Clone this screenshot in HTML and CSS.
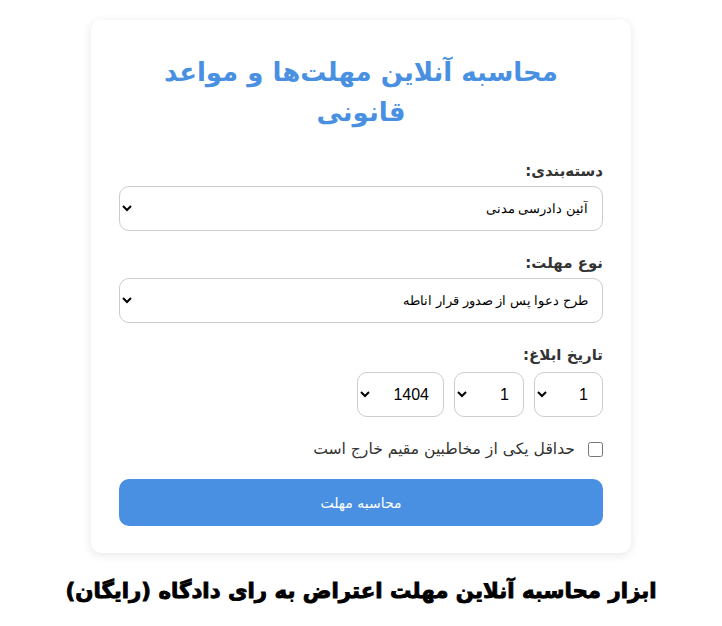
FILE: index.html
```html
<!DOCTYPE html>
<html lang="fa" dir="rtl">
<head>
    <meta charset="UTF-8">
    <meta name="viewport" content="width=device-width, initial-scale=1.0">
    <title>محاسبه آنلاین مهلت‌ها و مواعد قانونی</title>
    <link rel="stylesheet" href="styles.css">
</head>
<body>
    <div class="container">
        <h1>محاسبه آنلاین مهلت‌ها و مواعد قانونی</h1>
        <form id="deadlineForm">
            <!-- دسته‌بندی -->
            <div class="form-group">
                <label for="category">دسته‌بندی:</label>
                <select id="category" class="full">
                    <option>آئین دادرسی مدنی</option>
                </select>
            </div>
            <!-- نوع مهلت -->
            <div class="form-group">
                <label for="type">نوع مهلت:</label>
                <select id="type" class="full">
                    <option>طرح دعوا پس از صدور قرار اناطه</option>
                </select>
            </div>
            <!-- تاریخ ابلاغ -->
            <div class="form-group">
                <label>تاریخ ابلاغ:</label>
                <div class="date-row">
                    <select id="day" class="day"><option>1</option></select>
                    <select id="month" class="month"><option>1</option></select>
                    <select id="year" class="year"><option>1404</option></select>
                </div>
            </div>
            <div class="check-group">
                <label><input type="checkbox" id="abroad">حداقل یکی از مخاطبین مقیم خارج است</label>
            </div>
            <button type="submit">محاسبه مهلت</button>
        </form>
    </div>
    <h2 class="caption">ابزار محاسبه آنلاین مهلت اعتراض به رای دادگاه (رایگان)</h2>
</body>
</html>
```

FILE: styles.css
```css
body {
    font-family: "DejaVu Sans", Tahoma, sans-serif;
    margin: 0;
    padding: 20px 0 0;
    background-color: #ffffff;
    color: #333;
}
.container {
    width: 484px;
    margin: 0 auto;
    background-color: white;
    padding: 32px 28px 27px;
    border-radius: 10px;
    box-shadow: 0 2px 10px rgba(0, 0, 0, 0.1);
}
h1 {
    color: #4a90e2;
    font-size: 26px;
    line-height: 40px;
    text-align: center;
    margin: 0 10px 30px;
}
.form-group {
    margin-bottom: 23px;
}
label {
    display: block;
    margin-bottom: 6px;
    font-weight: bold;
    font-size: 15px;
}
select {
    font-family: "Liberation Sans", Arial, sans-serif;
    font-size: 13px;
    color: #000;
    height: 45px;
    padding: 0 10px;
    border: 1px solid #ccc;
    border-radius: 10px;
    background: white;
}
select.full {
    width: 100%;
}
.date-row {
    display: flex;
    gap: 10px;
    margin-top: 8px;
}
.date-row select {
    font-size: 16px;
}
.day { width: 69px; }
.month { width: 70px; }
.year { width: 87px; }
.check-group {
    margin: 0 0 21px;
}
.check-group label {
    display: flex;
    align-items: center;
    font-weight: normal;
    font-size: 15.6px;
}
input[type="checkbox"] {
    width: 15px;
    height: 15px;
    margin: 0 0 0 13px;
}
button {
    width: 100%;
    height: 47px;
    background-color: #4a90e2;
    color: white;
    font-family: "DejaVu Sans", Tahoma, sans-serif;
    font-size: 14px;
    border: none;
    border-radius: 10px;
    cursor: pointer;
}
.caption {
    text-align: center;
    font-size: 21.3px;
    line-height: 36px;
    font-weight: 900;
    color: #000;
    -webkit-text-stroke: 0.9px #000;
    margin: 20px 0 0;
}
```
